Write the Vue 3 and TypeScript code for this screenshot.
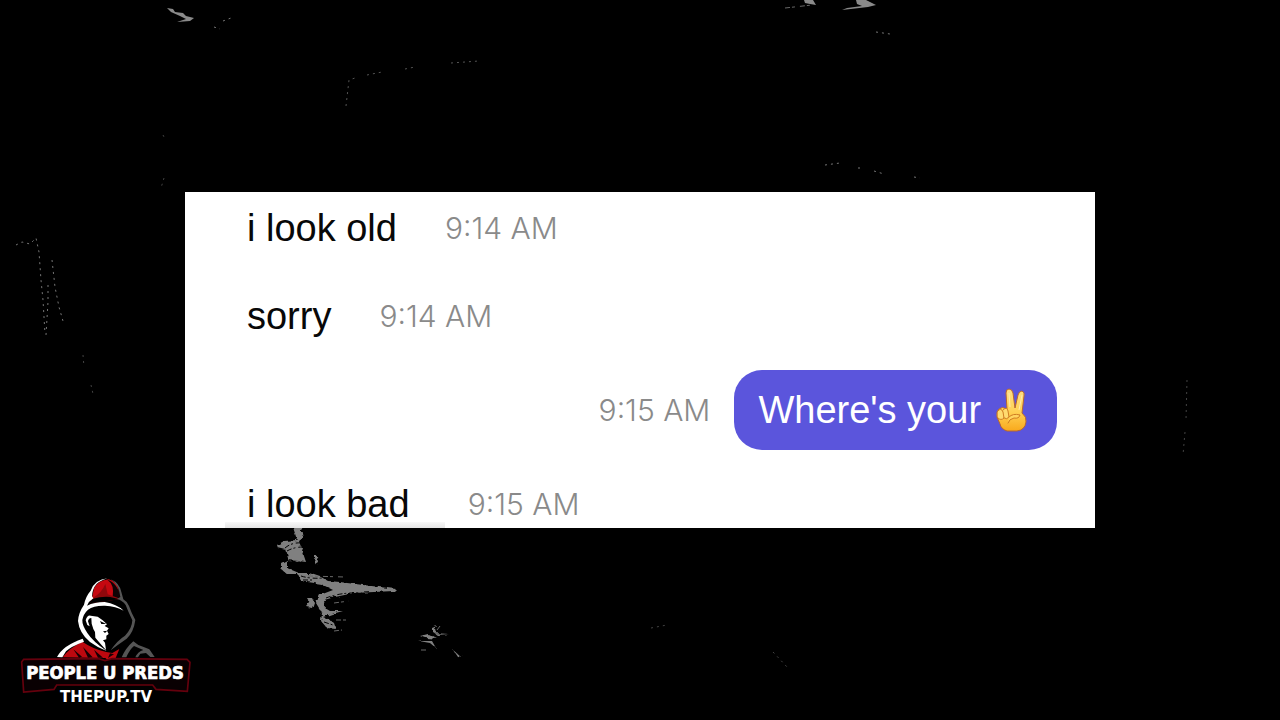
<script setup lang="ts">
interface Message {
  id: number
  text: string
  time: string
  mine?: boolean
}

const messages: Message[] = [
  { id: 1, text: 'i look old', time: '9:14 AM' },
  { id: 2, text: 'sorry', time: '9:14 AM' },
  { id: 3, text: "Where's your", time: '9:15 AM', mine: true },
  { id: 4, text: 'i look bad', time: '9:15 AM' },
]
</script>

<template>
  <main class="stage">
    <svg class="scratches" viewBox="0 0 1280 720" preserveAspectRatio="xMidYMid slice" aria-hidden="true">
      <defs>
        <filter id="rough" x="-10%" y="-10%" width="120%" height="120%">
          <feTurbulence type="fractalNoise" baseFrequency="0.18 0.3" numOctaves="2" seed="4" result="noise" />
          <feDisplacementMap in="SourceGraphic" in2="noise" scale="5" />
        </filter>
      </defs>
      <g fill="#8a8a8a">
        <path d="M167 8 L173 9 L175 12 L183 13 L186 16 L194 18 L190 21 L177 22 L186 19 L180 16 L171 12Z" />
        <path d="M804 0 L813 0 L816 5 L810 4 L805 3Z M856 0 L866 0 L876 5 L868 7 L842 10 L847 8 L862 6 L857 4Z" />
      </g>
      <g fill="#808080" filter="url(#rough)">
        <path d="M293 527 L301 527 L303 538 L299 541 L306 562 L299 561 L287 560 L287 568 L299 573 L309 573 L321 577 L328 581 L340 582 L347 583 L396 589 L394 591 L354 593 L335 597 L324 600 L325 608 L330 611 L343 611 L332 614 L323 617 L330 620 L334 623 L336 629 L327 628 L321 621 L322 613 L316 603 L320 595 L333 590 L321 584 L301 581 L298 574 L287 574 L281 569 L281 563 L289 559 L286 550 L278 548 L277 545 L284 541 L297 540Z" />
        <path d="M307 598 L312 598 L314 602 L312 608 L307 607 L310 603Z M314 556 L317 556 L318 562 L315 564Z" />
        <path d="M432 628 L437 626 L435 630 L437 632 L432 632Z M434 633 L449 634 L437 635Z M420 636 L428 634 L438 639 L426 638Z M419 641 L432 641 L436 648 L430 643Z M453 650 L460 656 L464 657 L457 656Z" />
      </g>
      <g fill="none" stroke="#000" stroke-width="1" stroke-dasharray="5 2 2 3">
        <path d="M285 548 Q292 542 302 543 M287 551 Q294 547 303 547 M287 564 Q295 559 305 564 M301 576 Q310 579 323 578 M326 598 Q341 592 362 593 M324 622 L336 626 M303 580 L315 580" />
      </g>
      <g fill="none" stroke="#777" stroke-width="1" stroke-dasharray="2 4">
        <path d="M16 245 L22 242 L30 244 L36 238 L39 252 L41 280 L43 300 L45 334 M52 260 L55 287 L59 307 L63 321 M48 285 L48 302 L46 335" />
        <path d="M346 106 L349 80 L355 78 M367 75 L382 72 M405 69 L415 67 M451 63 L479 61" stroke="#555" />
        <path d="M214 27 L220 29 M223 21 L231 18 M876 32 L890 34 M825 165 L840 163 M858 168 L862 168 M874 171 L884 174 M914 177 L920 178" />
        <path d="M1187 380 L1186 420 M1185 432 L1183 455 M163 135 L165 139 M164 178 L161 188 M651 628 L667 625 M773 652 L788 668 M83 355 L84 367 M91 385 L93 394" stroke="#444" />
      </g>
      <g fill="none" stroke="#686868" stroke-width="1" stroke-dasharray="5 2 3 5">
        <path d="M308 576 L345 577 M334 603 L349 601 M336 620 L347 620 M334 631 L342 630 M421 650 L426 650 M437 630 L440 626 M785 8 L812 5" />
      </g>
    </svg>

    <section class="chat" aria-label="Conversation">
      <div v-for="m in messages" :key="m.id" class="row" :class="{ mine: m.mine }">
        <p class="text">
          {{ m.text }}
          <svg v-if="m.mine" class="hand" viewBox="0 0 34 44" role="img" aria-label="Victory hand">
            <defs>
              <linearGradient id="skin" x1="0" y1="0" x2="0" y2="1">
                <stop offset="0" stop-color="#ffdf83" />
                <stop offset="0.55" stop-color="#ffd053" />
                <stop offset="1" stop-color="#f9a91c" />
              </linearGradient>
            </defs>
            <g fill="url(#skin)" stroke="#b8662f" stroke-width="1" stroke-linejoin="round">
              <path d="M12 21 L11 5 Q11 1 14 1 Q17 1 18 5 L20 20 L23 7 Q24 3 27 3 Q30 4 29 8 L27 25 Q32 29 31 34 Q30 42 22 43 L12 43 Q6 41 5 36 L2 29 Q1 23 4 21 Q7 18 12 21Z" />
            </g>
            <path d="M3 23 Q6 19 8 24 L9 30 Q6 33 3 30 M8 22 Q12 18 13 23 L14 29 Q12 32 9 30" fill="#ffdb70" stroke="#cf7d22" stroke-width="1" stroke-linecap="round" />
            <path d="M14 29 Q18 25 25 27 Q24 31 19 30 Q14 31 13 35" fill="#ffd45f" stroke="#cf7d22" stroke-width="1" stroke-linecap="round" />
            <path d="M14 5 L15 19 M27 7 L24 22" stroke="#ffeab0" stroke-width="1" fill="none" />
          </svg>
        </p>
        <time class="time">{{ m.time }}</time>
      </div>
    </section>

    <svg class="logo" viewBox="0 0 570 420" role="img" aria-label="People U Preds, thepup.tv">
      <path d="M252 55 Q264 31 296 28 Q319 34 324 54 L328 82 Q290 83 243 98Z" fill="#c50810" />
      <path d="M292 29 Q314 44 308 80 L331 86 Q326 40 292 29Z" fill="#100305" />
      <path d="M250 83 Q276 67 286 42 L293 73 L333 87 L241 100Z" fill="#8e080c" />
      <path d="M246 87 Q277 78 301 81 L329 88 L241 100Z" fill="#000" />
      <path d="M293 25 Q254 29 242 62 Q227 79 222 104 Q205 129 204 153 Q208 190 240 216 Q263 233 290 243 Q248 214 232 189 Q216 165 217 150 Q220 132 234 119 Q251 106 285 107 Q318 109 341 122 Q320 102 284 96 Q253 96 231 107 Q236 94 250 85 L246 79 Q247 57 259 43 Q269 32 293 25Z" fill="#fff" />
      <path d="M303 28 Q329 40 334 66 L340 88 Q351 94 357 108 Q365 131 376 150 Q371 187 350 206 Q325 223 302 241 Q322 211 345 197 Q366 176 367 151 Q355 126 347 105 Q337 91 321 87 L331 81 Q327 45 303 28Z" fill="#555" />
      <path d="M242 137 Q231 135 227 151 L232 165 L239 169 L234 154 Q235 145 244 144 L245 161 L250 177 L255 186 L256 203 L272 222 L288 240 L285 218 L279 211 L289 208 L289 197 L296 192 L291 182 L296 175 L284 168 L291 163 L278 151 L263 140Z" fill="#fff" />
      <path d="M270 153 L289 162 L274 162Z M279 184 L292 182 L285 189Z" fill="#000" />
      <path d="M158 262 Q176 235 217 215 Q249 237 289 246 L307 249 L328 237 L317 264 L302 278 L286 264Z" fill="#bd080f" />
      <path d="M190 238 L216 260 L207 263Z M219 231 L248 262 L234 263Z M252 239 L279 263 L264 263Z M300 250 L294 264 L312 253Z" fill="#160003" />
      <path d="M141 261 Q159 226 218 206 L222 215 Q183 229 168 244 L157 262Z" fill="#fff" />
      <path d="M335 262 Q347 234 370 214 L385 225 L401 231 L418 238 L434 261 L421 261 L408 249 L391 251 L384 262 L376 262 Q384 244 400 240 L372 228 Q359 238 349 262Z" fill="#555" />
      <path d="M41 268 L265 266 L285 272 L307 266 L531 268 L540 277 L532 364 L438 358 L428 345 L140 345 L132 358 L41 366 L35 276Z" fill="#090002" stroke="#65000d" stroke-width="5" />
      <g fill="#fff" text-anchor="middle">
        <text class="brand" x="285" y="328">PEOPLE U PREDS</text>
        <text class="site" x="288" y="396">THEPUP.TV</text>
      </g>
    </svg>
  </main>
</template>

<style>
body {
  margin: 0;
  background: #000;
}
</style>

<style scoped>
.stage {
  position: relative;
  display: flex;
  align-items: center;
  justify-content: center;
  min-height: 100vh;
  overflow: hidden;
  background: #000;
  font-family: "Liberation Sans", Arial, sans-serif;
}

.scratches {
  position: absolute;
  inset: 0;
  width: 100%;
  height: 100%;
}

.chat {
  position: relative;
  box-sizing: border-box;
  display: flex;
  flex-direction: column;
  width: 71.1%;
  padding: 12px 38px 0 62px;
  overflow: hidden;
  background: #fff;
}

.row {
  position: relative;
  display: flex;
  align-items: center;
  gap: 48px;
  margin-bottom: 40px;
}

.row:nth-child(2),
.row.mine {
  margin-bottom: 30px;
}

.row:last-child {
  gap: 58px;
  margin-bottom: 0;
}

.row:last-child::after {
  content: "";
  position: absolute;
  bottom: 0;
  left: -22px;
  width: 220px;
  height: 6px;
  background: linear-gradient(#f8f8f8, #e6e6e6);
}

.text {
  margin: 0;
  color: #080808;
  font-size: 38px;
  line-height: 48px;
}

.time {
  color: #8a8a8a;
  font-family: Inter, "Liberation Sans", sans-serif;
  font-size: 30px;
  font-weight: 300;
  line-height: 48px;
}

.row.mine {
  flex-direction: row-reverse;
  gap: 24px;
}

.mine .text {
  display: flex;
  align-items: center;
  gap: 14px;
  padding: 16px 28px 16px 24px;
  border-radius: 28px;
  background: #5b55dc;
  color: #fff;
}

.hand {
  width: 34px;
  height: 44px;
}

.logo {
  position: absolute;
  bottom: 10px;
  left: 10px;
  width: 190px;
  height: 140px;
}

.brand {
  font: bold 55px "DejaVu Sans Condensed", "DejaVu Sans", sans-serif;
  stroke: #fff;
  stroke-width: 2px;
}

.site {
  font: bold 45px "DejaVu Sans", sans-serif;
}
</style>
